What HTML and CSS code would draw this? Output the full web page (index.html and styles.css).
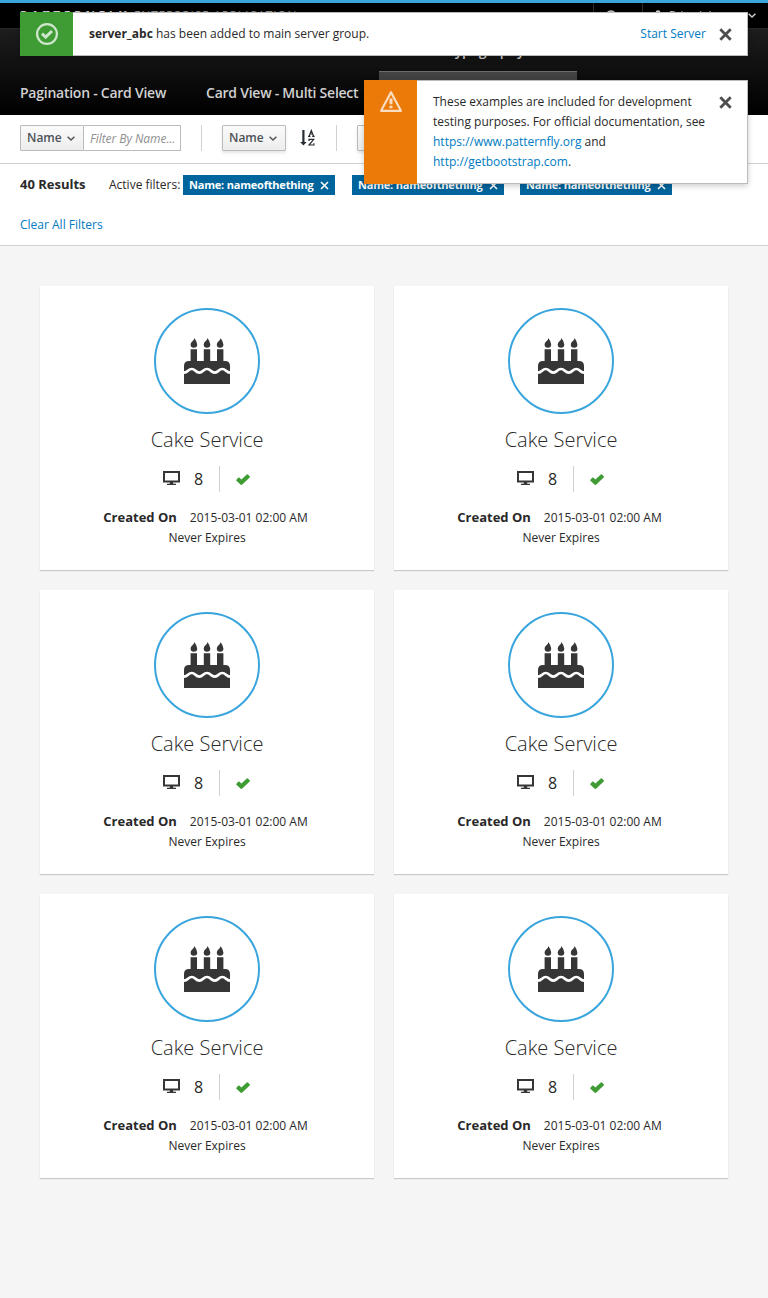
FILE: index.html
```html
<!DOCTYPE html>
<html lang="en">
<head>
<meta charset="utf-8">
<title>Card View</title>
<link rel="stylesheet" href="styles.css">
</head>
<body>
<svg class="sprite" aria-hidden="true">
  <symbol id="cake" viewBox="0 0 46 46">
    <path fill="#363636" d="M6.6 11.3H13V23H19.8V11.3H26.2V23H33V11.3H39.4V23H41Q46 23 46 28V46H0V28Q0 23 5 23H6.6ZM10.3 0Q13.2 3.8 13.2 6.4A3.3 3.3 0 0 1 6.6 6.4Q6.6 4.7 8.4 3.3Q10.4 1.8 10.3 0ZM23.4 0Q26.3 3.8 26.3 6.4A3.3 3.3 0 0 1 19.7 6.4Q19.7 4.7 21.5 3.3Q23.5 1.8 23.4 0ZM36.5 0Q39.4 3.8 39.4 6.4A3.3 3.3 0 0 1 32.8 6.4Q32.8 4.7 34.6 3.3Q36.6 1.8 36.5 0Z"/>
    <path fill="none" stroke="#fff" stroke-width="2.7" d="M-.5 34.7C4 34.7 4 31 7.7 31S11.5 34.7 15.3 34.7S19.2 31 23 31S26.8 34.7 30.7 34.7S34.5 31 38.3 31S42 34.7 46.5 34.7"/>
  </symbol>
  <symbol id="screen" viewBox="0 0 17 14">
    <path fill="#363636" fill-rule="evenodd" d="M0 0H17V11.5H10.2V12.7H13V14H4V12.7H6.8V11.5H0ZM2 2V9.4H15V2Z"/>
  </symbol>
  <symbol id="check" viewBox="0 0 14 11">
    <path fill="#3f9c35" d="M.4 5.7L2.4 3.6Q3 3.2 3.5 3.7L5.4 5.5L10.8.4Q11.4 0 11.9.4L13.7 2.2Q14.2 2.8 13.7 3.4L6 10.8Q5.4 11.2 4.8 10.8L.4 6.8Q0 6.2.4 5.7Z"/>
  </symbol>
  <symbol id="angle" viewBox="0 0 8 5"><path fill="none" stroke="currentColor" stroke-width="1.4" d="M.6.7L4 4L7.4.7"/></symbol>
  <symbol id="close" viewBox="0 0 14 14"><path fill="none" stroke="currentColor" stroke-width="3" d="M1.4 1.4L12.6 12.6M12.6 1.4L1.4 12.6"/></symbol>
</svg>

<header class="navbar">
  <div class="utility">
    <span class="brand"><b>PATTERNFLY</b> ENTERPRISE APPLICATION</span>
    <span class="util-item help"><svg width="12" height="12" viewBox="0 0 12 12"><circle cx="6" cy="6" r="5" fill="none" stroke="currentColor" stroke-width="1.6"/></svg></span>
    <span class="util-item user"><svg width="8" height="11" viewBox="0 0 8 11"><circle cx="4" cy="2.6" r="2.4" fill="currentColor"/><path fill="currentColor" d="M0 11V8Q4 4 8 8V11Z"/></svg><span>Brian Johnson</span><svg class="caret" width="8" height="5"><use href="#angle"/></svg></span>
  </div>
  <nav class="primary">
    <div class="nav-row first"><a>Typography</a></div>
    <div class="nav-row"><a>Pagination - Card View</a><a>Card View - Multi Select</a><a class="active"></a></div>
  </nav>
</header>

<section class="toolbar">
  <div class="controls">
    <div class="filter"><button class="btn">Name<svg width="8" height="5"><use href="#angle"/></svg></button><span class="field">Filter By Name...</span></div>
    <div class="sort">
      <button class="btn raised">Name<svg width="8" height="5"><use href="#angle"/></svg></button>
      <svg class="sort-icon" width="16" height="18" viewBox="0 0 16 18"><path fill="#292e34" d="M2.3 1H4.5V13H6.7L3.4 16.5L.2 13H2.3Z"/><path fill="none" stroke="#292e34" stroke-width="1.2" d="M8 7.3H10.4M12.2 7.3H14.7M9.2 7L11.3 1.5L13.5 7M10 5H12.7M9 12V10.3H13.7L9 16H13.9V14.2"/></svg>
    </div>
    <div class="actions"><button class="btn raised">Action</button></div>
  </div>
  <div class="results">
    <div class="filters">
      <strong>40 Results</strong>
      <span class="label">Active filters:</span>
      <span class="tag">Name: nameofthething<svg width="9" height="9" viewBox="0 0 9 9"><path fill="none" stroke="currentColor" stroke-width="1.6" d="M1 1L8 8M8 1L1 8"/></svg></span>
      <span class="tag">Name: nameofthething<svg width="9" height="9" viewBox="0 0 9 9"><path fill="none" stroke="currentColor" stroke-width="1.6" d="M1 1L8 8M8 1L1 8"/></svg></span>
      <span class="tag">Name: nameofthething<svg width="9" height="9" viewBox="0 0 9 9"><path fill="none" stroke="currentColor" stroke-width="1.6" d="M1 1L8 8M8 1L1 8"/></svg></span>
    </div>
    <a class="clear">Clear All Filters</a>
  </div>
</section>

<main class="cards">
  <article class="card"><div class="ring"><svg width="46" height="46"><use href="#cake"/></svg></div><h2>Cake Service</h2><div class="stats"><span class="hosts"><svg width="17" height="14"><use href="#screen"/></svg>8</span><span class="ok"><svg width="14" height="11"><use href="#check"/></svg></span></div><p><strong>Created On</strong>2015-03-01 02:00 AM<br>Never Expires</p></article>
  <article class="card"><div class="ring"><svg width="46" height="46"><use href="#cake"/></svg></div><h2>Cake Service</h2><div class="stats"><span class="hosts"><svg width="17" height="14"><use href="#screen"/></svg>8</span><span class="ok"><svg width="14" height="11"><use href="#check"/></svg></span></div><p><strong>Created On</strong>2015-03-01 02:00 AM<br>Never Expires</p></article>
  <article class="card"><div class="ring"><svg width="46" height="46"><use href="#cake"/></svg></div><h2>Cake Service</h2><div class="stats"><span class="hosts"><svg width="17" height="14"><use href="#screen"/></svg>8</span><span class="ok"><svg width="14" height="11"><use href="#check"/></svg></span></div><p><strong>Created On</strong>2015-03-01 02:00 AM<br>Never Expires</p></article>
  <article class="card"><div class="ring"><svg width="46" height="46"><use href="#cake"/></svg></div><h2>Cake Service</h2><div class="stats"><span class="hosts"><svg width="17" height="14"><use href="#screen"/></svg>8</span><span class="ok"><svg width="14" height="11"><use href="#check"/></svg></span></div><p><strong>Created On</strong>2015-03-01 02:00 AM<br>Never Expires</p></article>
  <article class="card"><div class="ring"><svg width="46" height="46"><use href="#cake"/></svg></div><h2>Cake Service</h2><div class="stats"><span class="hosts"><svg width="17" height="14"><use href="#screen"/></svg>8</span><span class="ok"><svg width="14" height="11"><use href="#check"/></svg></span></div><p><strong>Created On</strong>2015-03-01 02:00 AM<br>Never Expires</p></article>
  <article class="card"><div class="ring"><svg width="46" height="46"><use href="#cake"/></svg></div><h2>Cake Service</h2><div class="stats"><span class="hosts"><svg width="17" height="14"><use href="#screen"/></svg>8</span><span class="ok"><svg width="14" height="11"><use href="#check"/></svg></span></div><p><strong>Created On</strong>2015-03-01 02:00 AM<br>Never Expires</p></article>
</main>

<div class="toasts">
  <div class="toast success">
    <div class="toast-icon"><svg width="22" height="22" viewBox="0 0 22 22"><circle cx="11" cy="11" r="9.9" fill="none" stroke="currentColor" stroke-width="2.2"/><path fill="none" stroke="currentColor" stroke-width="3" d="M6 10.6L9.7 14.1L16 8"/></svg></div>
    <div class="toast-text"><strong>server_abc</strong> has been added to main server group.</div>
    <a class="toast-action">Start Server</a>
    <svg class="toast-close" width="13" height="13"><use href="#close"/></svg>
  </div>
  <div class="toast warning">
    <div class="toast-icon"><svg width="22" height="21" viewBox="0 0 22 21"><path fill="none" stroke="currentColor" stroke-width="2.2" stroke-linejoin="round" d="M11 1.2L20.9 19.8H1.1Z"/><path fill="currentColor" d="M9.5 7.5H12.5V13.3H9.5ZM9.5 14.7H12.5V17.3H9.5Z"/></svg></div>
    <div class="toast-text">These examples are included for development testing purposes. For official documentation, see <a>https://www.patternfly.org</a> and <a>http://getbootstrap.com</a>.</div>
    <svg class="toast-close" width="13" height="13"><use href="#close"/></svg>
  </div>
</div>
</body>
</html>
```
FILE: styles.css
```css
* { box-sizing: border-box; }
body {
  margin: 0;
  min-height: 1298px;
  background: #f5f5f5;
  color: #292929;
  font: 12px/20px "Open Sans", sans-serif;
  position: relative;
}
svg { display: block; flex: none; }
.sprite { position: absolute; width: 0; height: 0; }
a { color: #007bc3; }

.navbar { height: 115px; border-top: 3px solid #39a5dc; background: #000; color: #d1d1d1; }
.utility { height: 25px; display: flex; align-items: center; }
.brand { margin-left: 20px; flex: 1; font-size: 12px; line-height: 12px; color: #8b8d8f; padding-top: 1px; letter-spacing: .8px; white-space: nowrap; }
.brand b { color: #ccc; letter-spacing: 3.5px; }
.util-item { height: 25px; border-left: 1px solid #2b2b2b; display: flex; align-items: center; }
.help { width: 49px; padding: 0 0 0 11px; }
.user { width: 126px; padding-left: 11px; gap: 7px; font-size: 11px; }
.user > svg:first-child { margin-bottom: 1px; }
.user span { flex: 1; white-space: nowrap; padding-bottom: 1px; }
.user .caret { margin-right: 13px; }
.primary { height: 87px; border-top: 1px solid #292929; background: linear-gradient(#1d1d1d, #000); }
.nav-row { display: flex; height: 43px; font-size: 14px; line-height: 43px; }
.nav-row a { color: #d1d1d1; font-weight: 600; margin-left: 20px; white-space: nowrap; letter-spacing: -.25px; }
.nav-row a + a { margin-left: 40px; }
.nav-row.first { height: 42px; line-height: 43px; padding-left: 427px; }
.nav-row .active { width: 198px; height: 44px; background: linear-gradient(#444, #303030); border-top: 1px solid #6c6c6c; }
.nav-row a + .active { margin-left: 21px; }

.toolbar { background: #fff; border-bottom: 1px solid #d1d1d1; height: 131px; }
.controls { height: 49px; border-bottom: 1px solid #d1d1d1; padding: 10px 20px; display: flex; }
.controls > div { display: flex; height: 26px; }
.filter { width: 182px; border-right: 1px solid #d1d1d1; }
.btn {
  height: 26px; width: 64px; padding: 0 8px 0 6px; border: 1px solid #bbb; border-radius: 1px;
  display: flex; align-items: center; justify-content: space-between;
  background: linear-gradient(#fafafa, #ededed); color: #4d5258;
  font: 600 12px/22px "Open Sans", sans-serif;
}
.raised { box-shadow: 0 2px 3px rgba(3, 3, 3, .1); }
.field { width: 97px; height: 26px; border: 1px solid #bbb; border-left: 0; padding: 3px 6px; font-style: italic; color: #8f8f8f; letter-spacing: -.05px; white-space: nowrap; overflow: hidden; }
.sort { width: 135px; border-right: 1px solid #d1d1d1; padding-left: 20px; }
.sort-icon { margin: 4px 0 0 14px; }
.actions { padding-left: 20px; }
.results { padding: 10px 20px; }
.filters { display: flex; align-items: center; height: 22px; white-space: nowrap; }
.filters strong { width: 89px; font-size: 13px; padding-bottom: 2px; }
.label { width: 74px; }
.tag { display: flex; align-items: center; justify-content: space-between; width: 152px; height: 20px; padding: 0 6px; margin-right: 17px; background: #00659c; color: #fff; font-size: 11px; font-weight: 700; letter-spacing: -.2px; }
.tag:nth-last-child(2) { margin-right: 16px; }
.clear { display: block; margin-top: 19px; }

.cards { display: grid; grid-template-columns: 334px 334px; gap: 20px; padding: 40px; }
.card { height: 284px; background: #fff; box-shadow: 0 1px 1px rgba(3, 3, 3, .175); display: flex; flex-direction: column; align-items: center; padding-top: 22px; text-align: center; }
.ring { width: 106px; height: 106px; border: 2px solid #39a5dc; border-radius: 50%; display: flex; align-items: center; justify-content: center; }
.ring svg { margin-top: -1px; }
.card h2 { margin: 14px 0 0; font-size: 20px; line-height: 24px; font-weight: 300; }
.stats { display: flex; height: 26px; margin-top: 14px; font-size: 16px; line-height: 26px; }
.hosts { display: flex; align-items: center; gap: 14px; padding-right: 16px; border-right: 1px solid #d1d1d1; }
.hosts svg { margin-top: -2px; }
.ok { display: flex; align-items: center; padding: 1px 2px 0 16px; margin-right: -1px; }
.card p { margin: 15px 0 0; }
.card p strong { font-size: 13px; margin: 0 13px 0 -3px; }

.toasts { position: absolute; top: 12px; left: 20px; right: 20px; display: flex; flex-direction: column; align-items: flex-end; gap: 24px; }
.toast { display: flex; background: #fff; border: 1px solid #bbb; border-left: 0; box-shadow: 0 2px 6px rgba(3, 3, 3, .2); }
.success { width: 728px; height: 44px; }
.warning { width: 384px; height: 104px; }
.toast-icon { width: 53px; margin: -1px 0; display: flex; justify-content: center; color: rgba(255, 255, 255, .75); padding-top: 11px; flex: none; }
.success .toast-icon { background: #3f9c35; }
.warning .toast-icon { background: #ec7a08; }
.toast-text { padding: 11px 0 0 16px; flex: 1; }
.toast-action { padding-top: 11px; margin-right: 13px; }
.toast-close { margin: 15px 15px 0 0; color: #4d4d4d; }
```
